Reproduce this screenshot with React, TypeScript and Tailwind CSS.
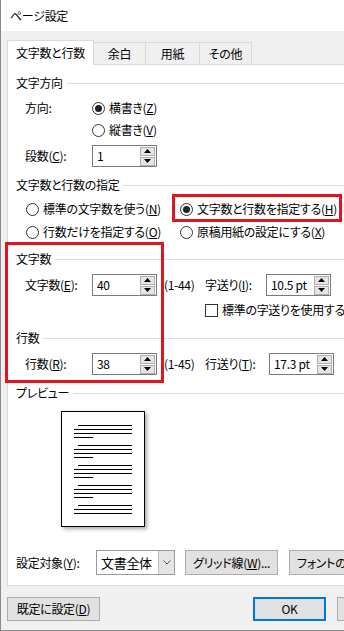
import React from "react";

const U = ({ c }: { c: string }) => <span className="underline">{c}</span>;

function Radio({ checked }: { checked?: boolean }) {
  return (
    <span className="w-[13px] h-[13px] rounded-full border border-[#333] bg-white flex items-center justify-center shrink-0">
      {checked && <span className="w-[7px] h-[7px] rounded-full bg-[#222]" />}
    </span>
  );
}

function Tri({ up }: { up?: boolean }) {
  return (
    <svg width="7" height="4" viewBox="0 0 7 4">
      {up ? <polygon points="0,4 7,4 3.5,0" fill="#000" /> : <polygon points="0,0 7,0 3.5,4" fill="#000" />}
    </svg>
  );
}

function Spin({ value }: { value: string }) {
  return (
    <div className="h-[22px] w-[65px] border border-[#7a7a7a] bg-white flex items-center shrink-0">
      <span className="flex-1 pl-[4px] leading-none">{value}</span>
      <div className="flex flex-col gap-[1px] mr-[1px] w-[15px]">
        <div className="h-[9px] border border-[#adadad] bg-[#e5e5e5] flex items-center justify-center">
          <Tri up />
        </div>
        <div className="h-[9px] border border-[#adadad] bg-[#e5e5e5] flex items-center justify-center">
          <Tri />
        </div>
      </div>
    </div>
  );
}

function GroupLabel({ text }: { text: string }) {
  return (
    <div className="flex items-center h-[16px] pl-[8px]">
      <span className="leading-none">{text}</span>
      <div className="flex-1 h-px bg-[#dcdcdc] ml-[4px]" />
    </div>
  );
}

function PreviewLines({ last }: { last?: boolean }) {
  return (
    <div className="flex flex-col gap-[3px]">
      <div className="h-px bg-black ml-[16px] mr-[12px]" />
      <div className="h-px bg-black ml-[12px] mr-[12px]" />
      <div className="h-px bg-black ml-[12px] mr-[12px]" />
      {last ? null : <div className="h-px bg-black ml-[12px] w-[19px]" />}
    </div>
  );
}

export default function App() {
  return (
    <div className="w-[344px] h-[631px] overflow-hidden relative bg-[#f0f0f0] border-l border-[#8a8a8a] text-[12px] text-black whitespace-nowrap tracking-[-0.3px] font-['Noto_Sans_CJK_JP',sans-serif] [font-feature-settings:'palt']">
      {/* title bar */}
      <div className="h-[31px] bg-white flex items-center pl-[9px]">
        <span>ページ設定</span>
      </div>

      {/* tabs */}
      <div className="pt-[8px] pl-[6px] flex items-end h-[33px]">
        <div className="w-[87px] h-[25px] bg-white border border-b-0 border-[#d9d9d9] flex items-center justify-center relative z-10 -mb-px">
          文字数と行数
        </div>
        <div className="w-[52px] h-[22px] border-t border-r border-[#d9d9d9] flex items-center justify-center">余白</div>
        <div className="w-[54px] h-[22px] border-t border-r border-[#d9d9d9] flex items-center justify-center">用紙</div>
        <div className="w-[52px] h-[22px] border-t border-r border-[#d9d9d9] flex items-center justify-center">その他</div>
      </div>

      {/* panel */}
      <div className="ml-[6px] w-[380px] h-[522px] bg-white border border-[#d9d9d9] flex flex-col">
        <div className="h-[10px]" />
        <GroupLabel text="文字方向" />

        <div className="mt-[7px] h-[20px] flex items-center pl-[17px]">
          <span className="w-[67px]">方向:</span>
          <Radio checked />
          <span className="ml-[4px]">横書き(<U c="Z" />)</span>
        </div>
        <div className="mt-[2px] h-[20px] flex items-center pl-[84px]">
          <Radio />
          <span className="ml-[4px]">縦書き(<U c="V" />)</span>
        </div>
        <div className="mt-[5px] h-[22px] flex items-center pl-[17px]">
          <span className="w-[67px]">段数(<U c="C" />):</span>
          <Spin value="1" />
        </div>

        <div className="mt-[10px]">
          <GroupLabel text="文字数と行数の指定" />
        </div>
        <div className="mt-[3px] h-[26px] flex items-center pl-[18px]">
          <div className="w-[154px] flex items-center">
            <Radio />
            <span className="ml-[4px]">標準の文字数を使う(<U c="N" />)</span>
          </div>
          <Radio checked />
          <span className="ml-[4px]">文字数と行数を指定する(<U c="H" />)</span>
        </div>
        <div className="h-[20px] flex items-center pl-[18px]">
          <div className="w-[154px] flex items-center">
            <Radio />
            <span className="ml-[4px]">行数だけを指定する(<U c="O" />)</span>
          </div>
          <Radio />
          <span className="ml-[4px]">原稿用紙の設定にする(<U c="X" />)</span>
        </div>

        <div className="mt-[9px]">
          <GroupLabel text="文字数" />
        </div>
        <div className="mt-[7px] h-[22px] flex items-center pl-[17px]">
          <span className="w-[67px]">文字数(<U c="E" />):</span>
          <Spin value="40" />
          <span className="ml-[7px] w-[41px]">(1-44)</span>
          <span className="w-[61px]">字送り(<U c="I" />):</span>
          <Spin value="10.5 pt" />
        </div>
        <div className="mt-[6px] h-[16px] flex items-center pl-[197px]">
          <span className="w-[13px] h-[13px] border border-[#333] bg-white shrink-0" />
          <span className="ml-[4px]">標準の字送りを使用する(</span>
        </div>

        <div className="mt-[12px]">
          <GroupLabel text="行数" />
        </div>
        <div className="mt-[7px] h-[22px] flex items-center pl-[17px]">
          <span className="w-[67px]">行数(<U c="R" />):</span>
          <Spin value="38" />
          <span className="ml-[7px] w-[41px]">(1-45)</span>
          <span className="w-[64px]">行送り(<U c="T" />):</span>
          <Spin value="17.3 pt" />
        </div>

        <div className="mt-[10px]">
          <GroupLabel text="プレビュー" />
        </div>
        <div className="mt-[10px] pl-[53px]">
          <div className="w-[84px] h-[116px] border border-black bg-white shadow-[2px_2px_4px_rgba(0,0,0,0.35)] pt-[13px] flex flex-col gap-[7px]">
            <PreviewLines />
            <PreviewLines />
            <PreviewLines />
            <PreviewLines />
            <PreviewLines last />
          </div>
        </div>

        <div className="mt-[23px] h-[25px] flex items-center pl-[8px]">
          <span className="w-[80px]">設定対象(<U c="Y" />):</span>
          <div className="w-[79px] h-[25px] border border-[#9a9a9a] bg-white flex items-center">
            <span className="flex-1 pl-[4px] text-[13px]">文書全体</span>
            <div className="w-[16px] h-full bg-[#e5e5e5] border-l border-[#bdbdbd] flex items-center justify-center">
              <svg width="8" height="5" viewBox="0 0 8 5">
                <polyline points="0.5,0.5 4,4 7.5,0.5" fill="none" stroke="#555" strokeWidth="1" />
              </svg>
            </div>
          </div>
          <div className="ml-[10px] w-[93px] h-[25px] bg-[#e1e1e1] border border-[#adadad] flex items-center justify-center">
            グリッド線(<U c="W" />)...
          </div>
          <div className="ml-[11px] w-[93px] h-[25px] bg-[#e1e1e1] border border-[#adadad] flex items-center pl-[7px]">
            フォントの設定(<U c="F" />)...
          </div>
        </div>
      </div>

      {/* bottom buttons */}
      <div className="mt-[11px] h-[24px] flex items-center pl-[6px]">
        <div className="w-[93px] h-[24px] bg-[#e1e1e1] border border-[#adadad] flex items-center justify-center shrink-0">
          既定に設定(<U c="D" />)
        </div>
        <div className="ml-[153px] w-[73px] h-[24px] bg-[#e1e1e1] border-2 border-[#0078d7] flex items-center justify-center shrink-0">
          OK
        </div>
        <div className="ml-[11px] w-[73px] h-[24px] bg-[#e1e1e1] border border-[#adadad] flex items-center justify-center shrink-0">
          キャンセル
        </div>
      </div>

      {/* window bottom border */}
      <div className="absolute left-0 right-0 bottom-0 h-px bg-[#8a8a8a]" />

      {/* red annotation boxes */}
      <div className="absolute left-[171px] top-[194px] w-[170px] h-[28px] border-[3px] border-[#e3141e]" />
      <div className="absolute left-[4px] top-[242px] w-[159px] h-[141px] border-[3px] border-[#e3141e]" />
    </div>
  );
}
